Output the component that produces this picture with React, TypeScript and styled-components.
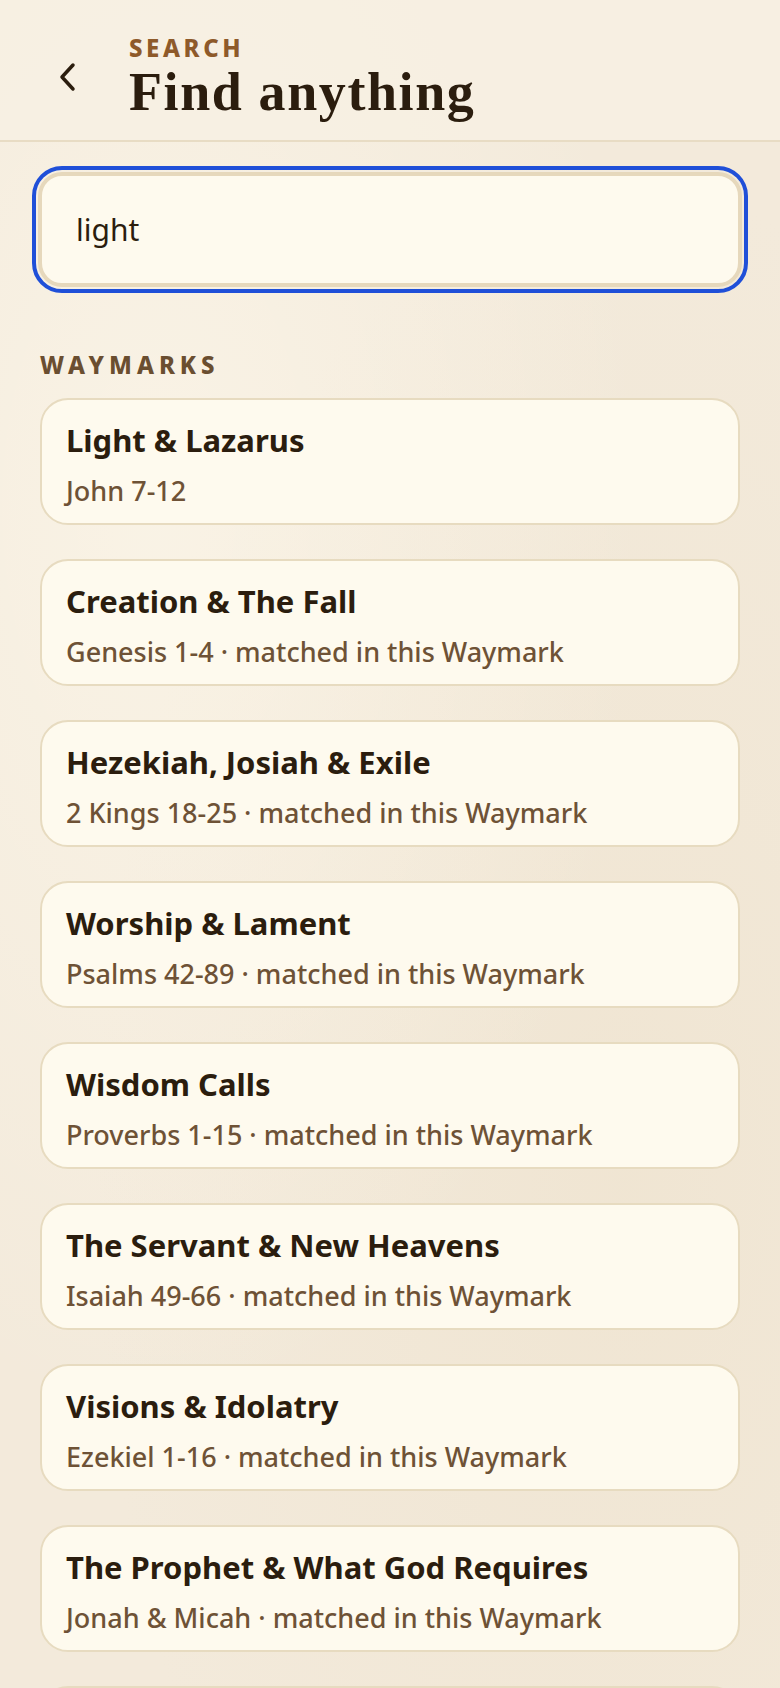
import React from "react"
import styled, { createGlobalStyle } from "styled-components"

const GlobalStyle = createGlobalStyle`
  html, body {
    margin: 0;
    padding: 0;
  }
  body {
    font-family: "Noto Sans", "Open Sans", sans-serif;
    color: #2b1d0e;
    background-color: #f3eadb;
    background-image:
      radial-gradient(ellipse at 20% 30%, rgba(255, 250, 238, 0.55), transparent 55%),
      radial-gradient(ellipse at 80% 70%, rgba(236, 223, 200, 0.45), transparent 60%);
    background-attachment: fixed;
  }
  * {
    box-sizing: border-box;
  }
`

const Page = styled.div`
  min-height: 100vh;
  display: flex;
  flex-direction: column;
`

const Header = styled.header`
  display: flex;
  align-items: center;
  gap: 33px;
  padding: 34px 40px 20px;
  background: rgba(247, 240, 227, 0.85);
  border-bottom: 2px solid #e8dcc4;
`

const BackButton = styled.button`
  width: 56px;
  height: 56px;
  display: flex;
  align-items: center;
  justify-content: center;
  padding: 0;
  border: none;
  background: transparent;
  color: #2b1d0e;
  cursor: pointer;
`

const TitleBlock = styled.div`
  display: flex;
  flex-direction: column;
`

const Eyebrow = styled.span`
  font-size: 24px;
  line-height: 28px;
  font-weight: 800;
  letter-spacing: 3.6px;
  text-transform: uppercase;
  color: #8e5a2a;
`

const Title = styled.h1`
  margin: 2px 0 0;
  font-family: "Liberation Serif", "Times New Roman", serif;
  font-size: 54px;
  line-height: 56px;
  font-weight: 700;
  letter-spacing: 1.6px;
  color: #2b1d0e;
`

const Main = styled.main`
  display: flex;
  flex-direction: column;
  padding: 30px 40px 40px;
`

const SearchInput = styled.input<{ $focused?: boolean }>`
  width: calc(100% + 4px);
  margin: 0 -2px;
  height: 115px;
  padding: 0 34px;
  border: 4px solid #e6d8bc;
  border-radius: 24px;
  background: #fefaee;
  font-family: "Noto Sans", "Open Sans", sans-serif;
  font-size: 30px;
  color: #2b1d0e;
  outline: ${p => (p.$focused ? "4px solid #1f4fd8" : "none")};
  outline-offset: 2px;
`

const SectionLabel = styled.h2`
  margin: 64px 0 19px;
  font-size: 24px;
  line-height: 28px;
  font-weight: 800;
  letter-spacing: 5px;
  text-transform: uppercase;
  color: #6a4e30;
`

const CardList = styled.ul`
  list-style: none;
  margin: 0;
  padding: 0;
  display: flex;
  flex-direction: column;
  gap: 34px;
`

const Card = styled.li`
  display: flex;
  flex-direction: column;
  gap: 15px;
  padding: 21px 24px 15px;
  background: #fefaee;
  border: 2px solid #e7dbc0;
  border-radius: 28px;
  cursor: pointer;
`

const CardTitle = styled.span`
  font-size: 31px;
  line-height: 38px;
  font-weight: 700;
  color: #2b1d0e;
`

const CardMeta = styled.span`
  font-size: 27px;
  line-height: 34px;
  font-weight: 500;
  color: #6e5236;
`

interface IWaymark {
  title: string
  passage: string
  matchedInside?: boolean
}

const waymarks: IWaymark[] = [
  { title: "Light & Lazarus", passage: "John 7-12" },
  { title: "Creation & The Fall", passage: "Genesis 1-4", matchedInside: true },
  { title: "Hezekiah, Josiah & Exile", passage: "2 Kings 18-25", matchedInside: true },
  { title: "Worship & Lament", passage: "Psalms 42-89", matchedInside: true },
  { title: "Wisdom Calls", passage: "Proverbs 1-15", matchedInside: true },
  { title: "The Servant & New Heavens", passage: "Isaiah 49-66", matchedInside: true },
  { title: "Visions & Idolatry", passage: "Ezekiel 1-16", matchedInside: true },
  { title: "The Prophet & What God Requires", passage: "Jonah & Micah", matchedInside: true },
  { title: "The Word Made Flesh", passage: "John 1-6", matchedInside: true },
]

const ChevronLeft = () => (
  <svg width="20" height="32" viewBox="0 0 20 32" fill="none">
    <path
      d="M15 4 L4 16 L15 28"
      stroke="currentColor"
      strokeWidth="3.5"
      strokeLinecap="round"
      strokeLinejoin="round"
    />
  </svg>
)

export default function App() {
  return (
    <Page>
      <GlobalStyle />
      <Header>
        <BackButton aria-label="Back">
          <ChevronLeft />
        </BackButton>
        <TitleBlock>
          <Eyebrow>Search</Eyebrow>
          <Title>Find anything</Title>
        </TitleBlock>
      </Header>
      <Main>
        <SearchInput $focused defaultValue="light" aria-label="Search" />
        <SectionLabel>Waymarks</SectionLabel>
        <CardList>
          {waymarks.map((w, index) => (
            <Card key={index}>
              <CardTitle>{w.title}</CardTitle>
              <CardMeta>
                {w.passage}
                {w.matchedInside ? " · matched in this Waymark" : ""}
              </CardMeta>
            </Card>
          ))}
        </CardList>
      </Main>
    </Page>
  )
}
